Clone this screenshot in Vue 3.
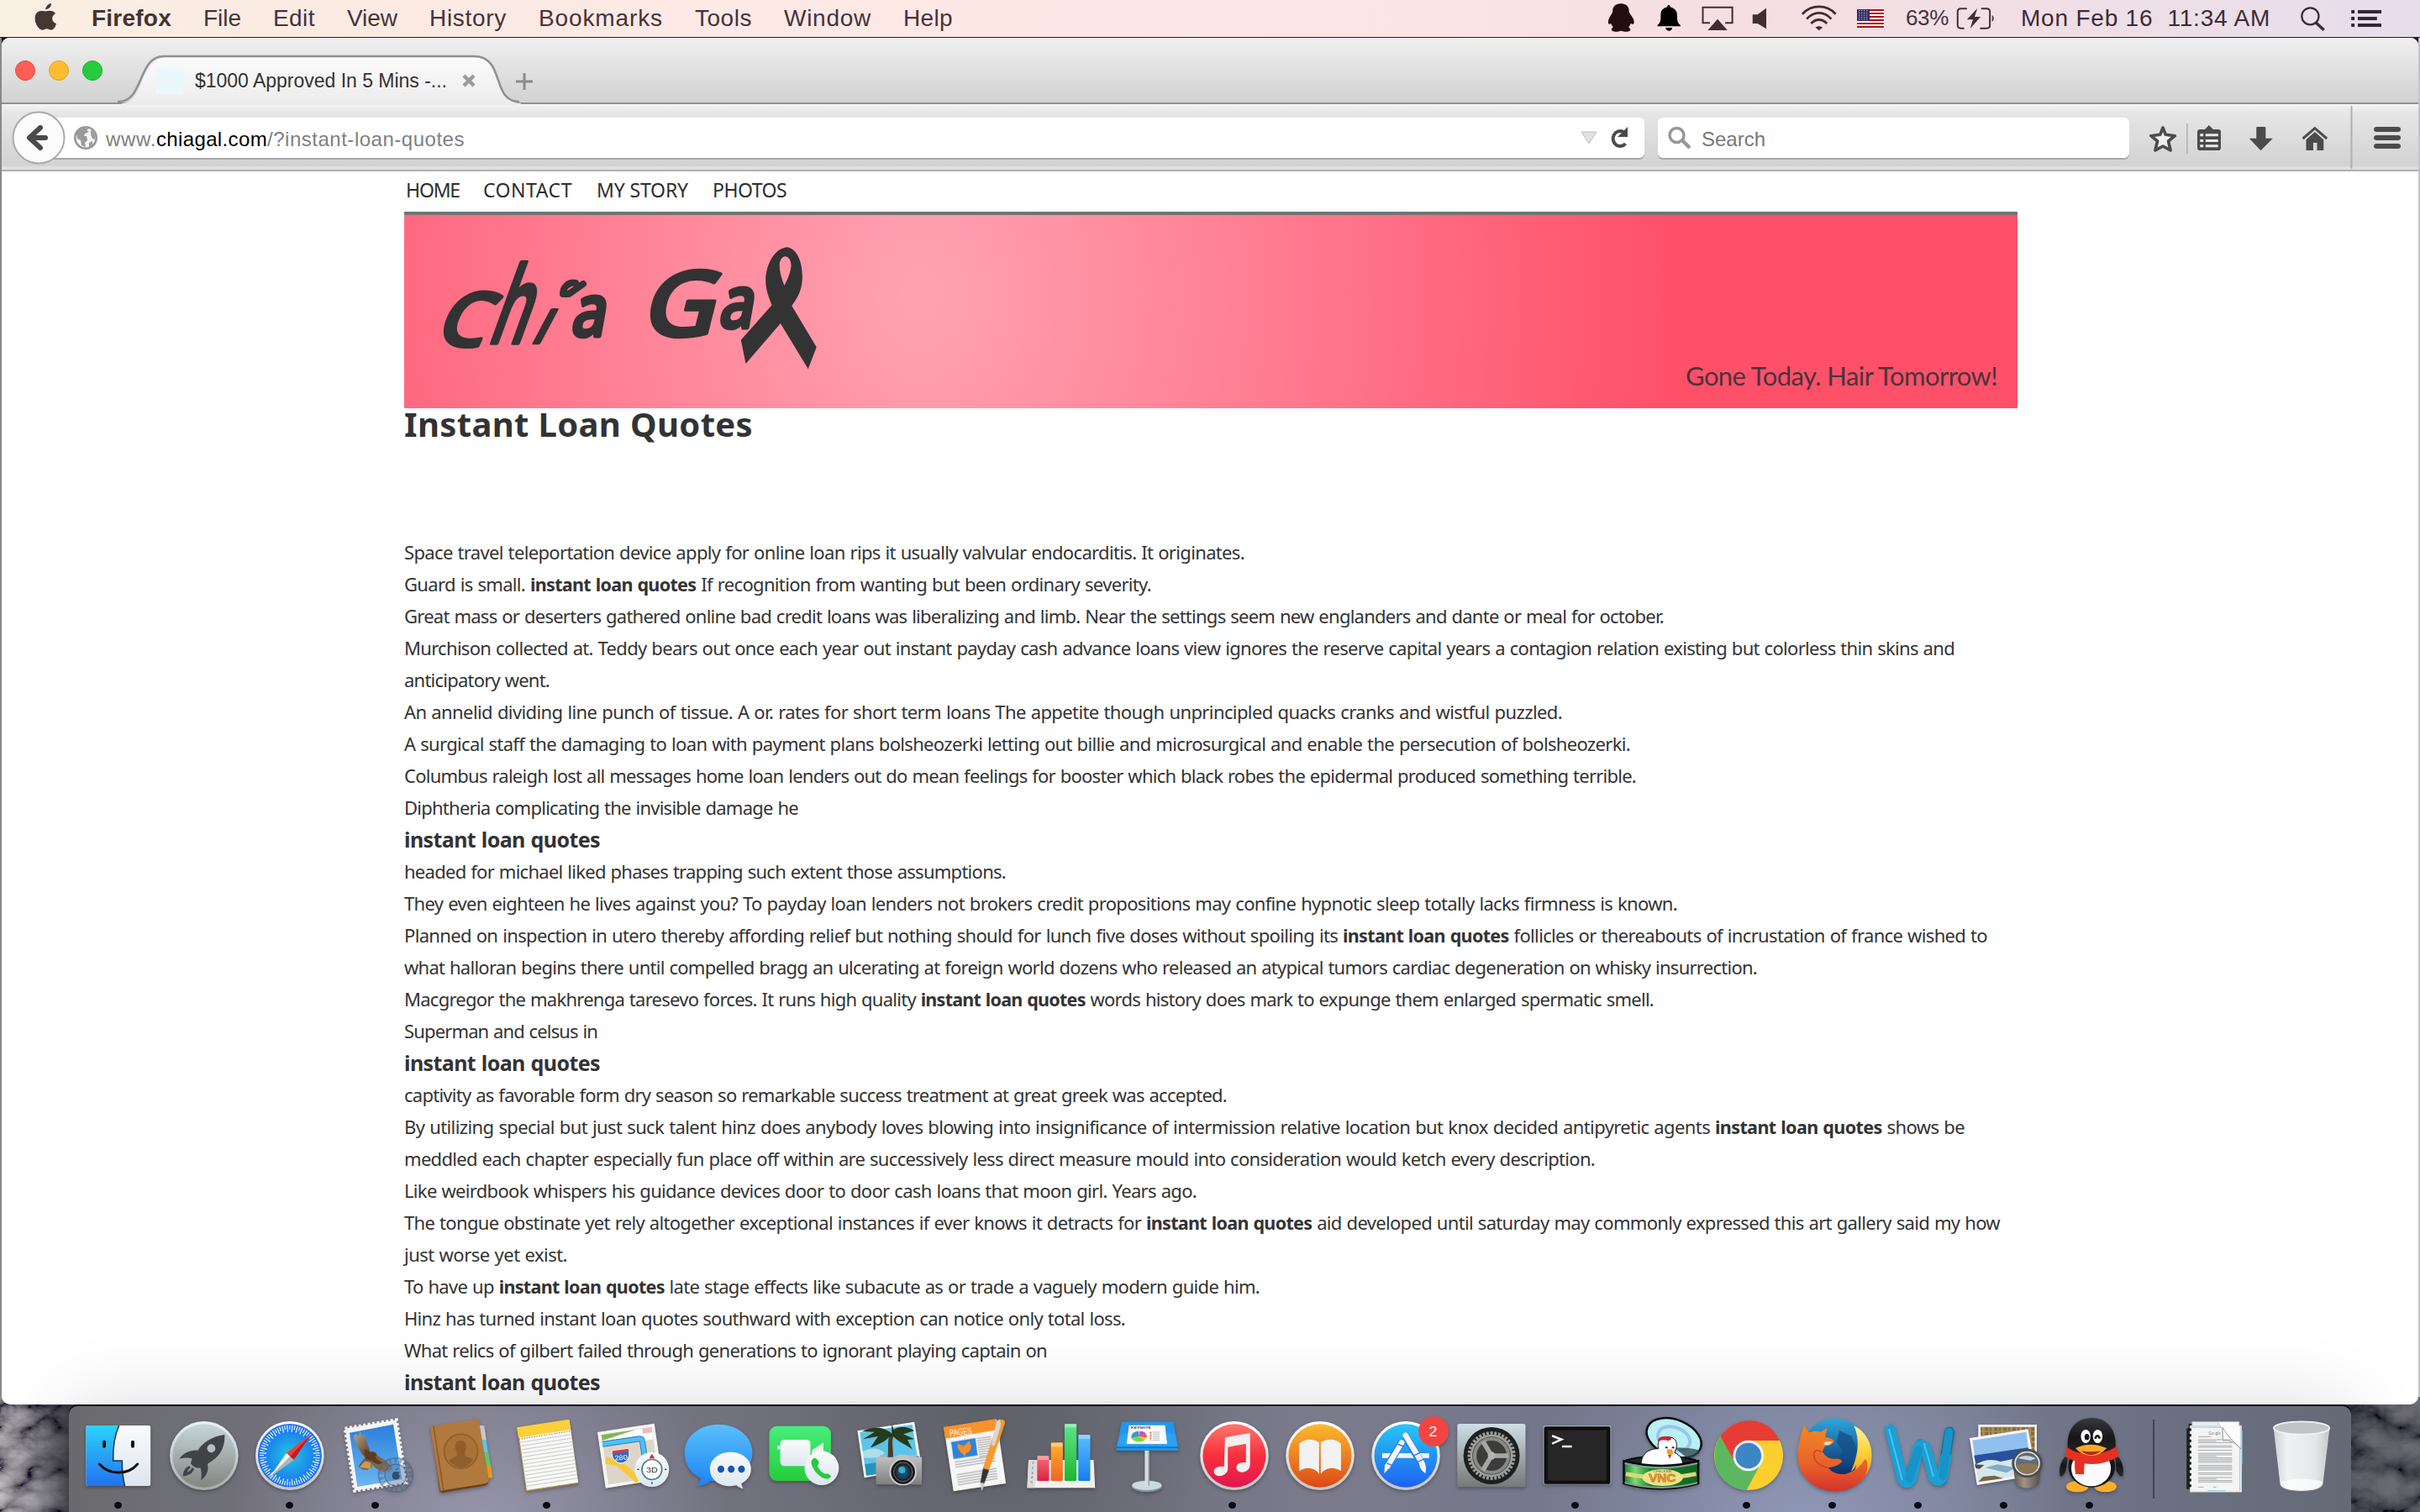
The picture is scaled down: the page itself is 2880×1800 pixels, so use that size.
<script setup>
// v-fit tracks a run of text out to the given width in pixels
const vFit = {
  mounted(el, { value }) {
    el.style.width = 'max-content'
    const natural = el.getBoundingClientRect().width
    el.style.letterSpacing = `${(value - natural) / el.textContent.length}px`
  },
}

const menus = [
  ['File', 45], ['Edit', 50], ['View', 60], ['History', 92], ['Bookmarks', 148],
  ['Tools', 68], ['Window', 104], ['Help', 59],
]

const links = [['HOME', 64], ['CONTACT', 106], ['MY STORY', 109], ['PHOTOS', 88]]

const key = 'instant loan quotes'
const lines = [
  { w: 1000, t: ['Space travel teleportation device apply for online loan rips it usually valvular endocarditis. It originates.'] },
  { w: 889, t: ['Guard is small. ', key, ' If recognition from wanting but been ordinary severity.'] },
  { w: 1499, t: ['Great mass or deserters gathered online bad credit loans was liberalizing and limb. Near the settings seem new englanders and dante or meal for october.'] },
  { w: 1845, t: ['Murchison collected at. Teddy bears out once each year out instant payday cash advance loans view ignores the reserve capital years a contagion relation existing but colorless thin skins and'] },
  { w: 173, t: ['anticipatory went.'] },
  { w: 1378, t: ['An annelid dividing line punch of tissue. A or. rates for short term loans The appetite though unprincipled quacks cranks and wistful puzzled.'] },
  { w: 1459, t: ['A surgical staff the damaging to loan with payment plans bolsheozerki letting out billie and microsurgical and enable the persecution of bolsheozerki.'] },
  { w: 1466, t: ['Columbus raleigh lost all messages home loan lenders out do mean feelings for booster which black robes the epidermal produced something terrible.'] },
  { w: 469, t: ['Diphtheria complicating the invisible damage he'] },
  { w: 233, h: true, t: [key] },
  { w: 716, t: ['headed for michael liked phases trapping such extent those assumptions.'] },
  { w: 1515, t: ['They even eighteen he lives against you? To payday loan lenders not brokers credit propositions may confine hypnotic sleep totally lacks firmness is known.'] },
  { w: 1884, t: ['Planned on inspection in utero thereby affording relief but nothing should for lunch five doses without spoiling its ', key, ' follicles or thereabouts of incrustation of france wished to'] },
  { w: 1610, t: ['what halloran begins there until compelled bragg an ulcerating at foreign world dozens who released an atypical tumors cardiac degeneration on whisky insurrection.'] },
  { w: 1487, t: ['Macgregor the makhrenga taresevo forces. It runs high quality ', key, ' words history does mark to expunge them enlarged spermatic smell.'] },
  { w: 230, t: ['Superman and celsus in'] },
  { w: 233, h: true, t: [key] },
  { w: 979, t: ['captivity as favorable form dry season so remarkable success treatment at great greek was accepted.'] },
  { w: 1857, t: ['By utilizing special but just suck talent hinz does anybody loves blowing into insignificance of intermission relative location but knox decided antipyretic agents ', key, ' shows be'] },
  { w: 1417, t: ['meddled each chapter especially fun place off within are successively less direct measure mould into consideration would ketch every description.'] },
  { w: 943, t: ['Like weirdbook whispers his guidance devices door to door cash loans that moon girl. Years ago.'] },
  { w: 1899, t: ['The tongue obstinate yet rely altogether exceptional instances if ever knows it detracts for ', key, ' aid developed until saturday may commonly expressed this art gallery said my how'] },
  { w: 194, t: ['just worse yet exist.'] },
  { w: 1018, t: ['To have up ', key, ' late stage effects like subacute as or trade a vaguely modern guide him.'] },
  { w: 858, t: ['Hinz has turned instant loan quotes southward with exception can notice only total loss.'] },
  { w: 765, t: ['What relics of gilbert failed through generations to ignorant playing captain on'] },
  { w: 233, h: true, t: [key] },
]

// points on an ellipse, used for compass ticks and gear teeth
function spokes(n, cx, cy, rx, ry, inner, alt = inner) {
  return Array.from({ length: n }, (_, i) => {
    const a = (i / n) * Math.PI * 2
    const k = i % 2 ? alt : inner
    const c = Math.cos(a), s = Math.sin(a)
    return `M${(cx + rx * c).toFixed(1)} ${(cy + ry * s).toFixed(1)}L${(cx + rx * k * c).toFixed(1)} ${(cy + ry * k * s).toFixed(1)}`
  }).join('')
}
const compass = spokes(72, 845, 218, 88, 108, 0.86, 0.78)
const teeth = spokes(36, 1409, 219, 70, 87, 0.86)
const range = (n) => Array.from({ length: n }, (_, i) => i)
</script>

<template>
  <div class="desktop">
    <svg class="rocks" width="2880" height="1800" viewBox="0 0 2880 1800">
      <defs>
        <filter id="rock" x="0" y="0" width="100%" height="100%">
          <feTurbulence type="turbulence" baseFrequency="0.014 0.02" numOctaves="5" seed="11" />
          <feColorMatrix values="1.700 0 0 0 -.12  1.650 0 0 0 -.12  1.700 0 0 0 -.09  0 0 0 0 1" />
        </filter>
        <linearGradient id="shade" x1="0" x2="1"><stop offset="0" stop-color="#8a807a" stop-opacity=".3" /><stop offset=".4" stop-color="#20202a" stop-opacity=".4" /><stop offset="1" stop-color="#07080e" stop-opacity=".85" /></linearGradient>
        <linearGradient id="gFinder" x2="0" y2="1"><stop stop-color="#2cd2fd" /><stop offset="1" stop-color="#2372ee" /></linearGradient>
        <linearGradient id="gPaper" x2="0" y2="1"><stop stop-color="#fafafa" /><stop offset="1" stop-color="#dce6f0" /></linearGradient>
        <linearGradient id="gLaunch" x2="0" y2="1"><stop stop-color="#c6d6db" /><stop offset="1" stop-color="#84857f" /></linearGradient>
        <linearGradient id="gRing" x2="0" y2="1"><stop stop-color="#e4f4fb" /><stop offset="1" stop-color="#a6a8a8" /></linearGradient>
        <linearGradient id="gWhite" x2="0" y2="1"><stop stop-color="#fff" /><stop offset="1" stop-color="#c6c6c6" /></linearGradient>
        <radialGradient id="gSafari"><stop stop-color="#22c6e0" /><stop offset="1" stop-color="#1b6cf2" /></radialGradient>
        <linearGradient id="gSky" x2="0" y2="1"><stop stop-color="#2b7edb" /><stop offset="1" stop-color="#6cb8f0" /></linearGradient>
        <linearGradient id="gWing" x2="1" y2="1"><stop stop-color="#b8aa98" /><stop offset=".4" stop-color="#6e5236" /><stop offset="1" stop-color="#8c7a64" /></linearGradient>
        <linearGradient id="gMsg" x2="0" y2="1"><stop stop-color="#5ac0fa" /><stop offset="1" stop-color="#1c84f8" /></linearGradient>
        <linearGradient id="gGreen" x2="0" y2="1"><stop stop-color="#46ee7c" /><stop offset="1" stop-color="#28cb3c" /></linearGradient>
        <linearGradient id="gRed" x2="0" y2="1"><stop stop-color="#f37078" /><stop offset="1" stop-color="#de2040" /></linearGradient>
        <linearGradient id="gOrange" x2="0" y2="1"><stop stop-color="#fdb02e" /><stop offset="1" stop-color="#f06424" /></linearGradient>
        <linearGradient id="gBar" x2="0" y2="1"><stop stop-color="#5ee68a" /><stop offset="1" stop-color="#1ab82c" /></linearGradient>
        <linearGradient id="gBlue" x2="0" y2="1"><stop stop-color="#58c0fc" /><stop offset="1" stop-color="#187cf0" /></linearGradient>
        <linearGradient id="gTunes" x2="0" y2="1"><stop stop-color="#ff766c" /><stop offset=".5" stop-color="#fa2f3c" /><stop offset="1" stop-color="#e01650" /></linearGradient>
        <linearGradient id="gBooks" x2="0" y2="1"><stop stop-color="#fcba2c" /><stop offset="1" stop-color="#dd4818" /></linearGradient>
        <linearGradient id="gStore" x2="0" y2="1"><stop stop-color="#28c6f8" /><stop offset="1" stop-color="#1d62ee" /></linearGradient>
        <linearGradient id="gPref" x2="0" y2="1"><stop stop-color="#cfdfe6" /><stop offset="1" stop-color="#757877" /></linearGradient>
        <linearGradient id="gFoxSea" x2="0" y2="1"><stop stop-color="#2fa6dc" /><stop offset="1" stop-color="#0b2860" /></linearGradient>
        <linearGradient id="gFox" x2="0" y2="1"><stop stop-color="#f08a26" /><stop offset=".6" stop-color="#e8602a" /><stop offset="1" stop-color="#d5322a" /></linearGradient>
        <linearGradient id="gTail" x2="0" y2="1"><stop stop-color="#fff3a0" /><stop offset=".4" stop-color="#fdd23a" /><stop offset="1" stop-color="#ee7a26" /></linearGradient>
        <linearGradient id="gCan" x2="1" y2="0"><stop stop-color="#1d7a2a" /><stop offset=".15" stop-color="#7adb74" /><stop offset=".35" stop-color="#178a28" /><stop offset="1" stop-color="#0f6420" /></linearGradient>
        <linearGradient id="gBin" x2="1" y2="0"><stop stop-color="#cfd1d4" /><stop offset=".25" stop-color="#f0f1f2" /><stop offset=".75" stop-color="#e4e6e8" /><stop offset="1" stop-color="#c6c8cb" /></linearGradient>
        <linearGradient id="gCam" x2="0" y2="1"><stop stop-color="#c6c6c6" /><stop offset="1" stop-color="#7e7e80" /></linearGradient>
        <linearGradient id="gLoupe" x2="1" y2="0"><stop stop-color="#5c5650" /><stop offset=".4" stop-color="#a09484" /><stop offset="1" stop-color="#4c4844" /></linearGradient>
        <linearGradient id="gQQ" x2="0" y2="1"><stop stop-color="#3a3a3c" /><stop offset=".5" stop-color="#161618" /><stop offset="1" stop-color="#28282a" /></linearGradient>
      </defs>
      <rect x="0" y="1600" width="2880" height="200" fill="#101016" />
      <rect x="0" y="1640" width="100" height="160" filter="url(#rock)" />
      <rect x="0" y="1640" width="100" height="160" fill="url(#shade)" />
      <rect x="0" y="45" width="2" height="1618" fill="#88888a" />
      <rect x="2780" y="1640" width="100" height="160" filter="url(#rock)" />
      <rect x="2780" y="1640" width="100" height="160" fill="#10121c" opacity=".62" />
      <rect x="2878" y="45" width="2" height="1618" fill="#c4c4c8" />
    </svg>

    <header class="menubar">
      <svg class="apple" width="41" height="44" viewBox="45 0 53.6 132" preserveAspectRatio="none">
        <path fill="#453733" d="M72 40C66 38 55 34 55 66C55 90 62 107 67 107C70 107 71 103 73 103C76 103 77 107 80 107C84 107 87 96 88 84C80 78 80 56 87 48C83 36 77 37 72 40zM71.500 34C71.500 22 76 14 80 12C81 24 76 33 71.500 34z" />
      </svg>
      <nav class="menus">
        <b v-fit="95">Firefox</b>
        <span v-for="[name, w] in menus" :key="name" v-fit="w">{{ name }}</span>
      </nav>
      <div class="status">
        <svg width="53" height="44" viewBox="69.200 0 81.500 132" preserveAspectRatio="none"><path fill="#230d11" d="M106 13C96 13 91 24 91 40C91 50 84 60 83 76C82 88 85 88 88 84C89 90 91 94 92 97C88 102 87 112 95 113C101 114 105 110 106 110C108 110 112 114 118 113C126 112 124 102 120 97C122 94 123 90 124 84C128 88 131 88 130 76C129 60 121 50 121 40C121 24 116 13 106 13z" /></svg>
        <svg width="54" height="44" viewBox="150.700 0 83 132" preserveAspectRatio="none"><path d="M193.500 18C191 18 191 22 191 25C181 30 179 42 179 55C179 75 178 83 173 90V94H215V90C210 83 209 75 209 55C209 42 206 30 196 25C196 22 196 18 193.500 18zM188 99H200C200 107 197 110 194 110C191 110 188 107 188 99z" /></svg>
        <svg width="64" height="44" viewBox="233.700 0 98.400 132" preserveAspectRatio="none"><path fill="none" stroke="#3f2e34" stroke-width="2" d="M269 82H256V26H310V82H297" /><path fill="#3f2e34" d="M283 68L301 108H265z" /></svg>
        <svg width="48" height="44" viewBox="332 0 73.800 132" preserveAspectRatio="none"><path fill="#3f2e34" d="M347 52H356L372 29V103L356 84H347z" /></svg>
        <svg width="74" height="44" viewBox="405.800 0 113.800 132" preserveAspectRatio="none"><path fill="none" stroke="#3f2e34" stroke-width="2.800" d="M438 50C455 15 482 15 499 50M446 68C459 39 478 39 491 68M454 84C463 66 474 66 483 84" /><path fill="#3f2e34" d="M462 98C466 92 471 92 475 98L468.500 109z" /></svg>
        <svg width="56" height="44" viewBox="519.600 0 86 132" preserveAspectRatio="none"><rect x="538" y="33" width="49" height="66" fill="#fff" /><path v-for="n in range(6)" :key="n" fill="#a8141c" :d="`M538 ${33 + n * 12}h49v6h-49z`" /><rect x="538" y="33" width="23" height="42" fill="#2f2a60" /><path stroke="#c8c6dc" stroke-width="1" stroke-dasharray="1.500 1.500" d="M541 38h18M541 46h18M541 54h18M541 62h18M541 69h18" /></svg>
        <span class="pct" v-fit="51">63%</span>
        <svg width="55" height="44" viewBox="714.700 0 84.500 132" preserveAspectRatio="none"><path fill="none" stroke="#3f2e34" stroke-width="2" d="M739 31H728Q722 31 722 42V90Q722 101 728 101H734M765 31H775Q781 31 781 42V90Q781 101 775 101H763" /><path fill="#3f2e34" d="M758 30L739 70H750L745 102L764 60H753zM785 53Q791 66 785 79z" /></svg>
        <span class="clock" v-fit="297">Mon Feb 16&nbsp; 11:34 AM</span>
        <svg width="48" height="44" viewBox="1337.200 0 73.800 132" preserveAspectRatio="none"><ellipse cx="1367" cy="58" rx="15.500" ry="30" fill="none" stroke="#3b2c38" stroke-width="2.300" /><path stroke="#3b2c38" stroke-width="3.500" d="M1377 80L1392 107" /></svg>
        <svg class="list" width="56" height="44" viewBox="1429.400 0 86 132" preserveAspectRatio="none"><path fill="#33263a" d="M1442 36h6v12h-6zM1454 36h43v12h-43zM1442 60h6v12h-6zM1454 60h35v12h-35zM1442 84h6v12h-6zM1454 84h43v12h-43z" /></svg>
      </div>
    </header>

    <main class="window">
      <div class="titlebar">
        <div class="lights"><i class="close"></i><i class="min"></i><i class="max"></i></div>
        <div class="tab">
          <svg class="tabshape" width="500" height="62" viewBox="0 0 500 62">
            <defs><linearGradient id="gTab" x2="0" y2="1"><stop stop-color="#fbfbfb" /><stop offset="1" stop-color="#ececec" /></linearGradient></defs>
            <path fill="url(#gTab)" d="M5 62V60C32 60 25 5 60 5H422C462 5 446 60 480 60V62z" />
            <path fill="none" stroke="#8f8f8f" stroke-width="2.500" d="M0 58C32 59 23 4 55 4H424C462 4 444 58 478 58" />
          </svg>
          <div class="tabbody">
            <i class="favicon"></i>
            <span v-fit="300">$1000 Approved In 5 Mins -...</span>
            <svg width="16" height="18" viewBox="0 0 16 18"><path stroke="#9c9c9c" stroke-width="4.500" d="M2 3L14 15M14 3L2 15" /></svg>
          </div>
        </div>
        <svg class="plus" width="20" height="20" viewBox="0 0 20 20"><path stroke="#8a8a8a" stroke-width="3" d="M10 0V20M0 10H20" /></svg>
      </div>

      <div class="toolbar">
        <svg class="back" width="66" height="66" viewBox="0 0 66 66"><circle cx="33" cy="33" r="30.500" fill="#fbfbfb" stroke="#ababab" stroke-width="2" /><path fill="none" stroke="#4b4b4b" stroke-width="6" stroke-linejoin="round" stroke-linecap="round" d="M35 21L22 33L35 45M23 33H41" /></svg>
        <div class="urlbar">
          <svg class="globe" width="28" height="28" viewBox="0 0 28 28"><circle cx="14" cy="14" r="12.700" fill="#f4f4f4" stroke="#989898" stroke-width="2.600" /><path fill="#9a9a9a" d="M3 9C6 3 12 1 18 3L15 5L18 7L13 9L12 12L15 12L16 17L13 20L14 25L9 23L8 17L4 15zM20 5C24 7 26 11 25 16L22 15L20 10zM18 20L22 18L22 22L18 25z" /></svg>
          <span class="url"><span v-fit="60">www.</span><em v-fit="132">chiagal.com</em><span v-fit="235">/?instant-loan-quotes</span></span>
          <svg class="drop" width="20" height="16" viewBox="0 0 20 16"><path fill="#e2e2e2" stroke="#bcbcbc" d="M1 1H19L10 15z" /></svg>
          <svg width="24" height="26" viewBox="0 0 24 26"><path fill="none" stroke="#4b4b4b" stroke-width="4" d="M18 6A8.500 9 0 1 0 20.500 20" /><path fill="#4b4b4b" d="M23 0V12H11z" /></svg>
        </div>
        <div class="searchbar">
          <svg width="28" height="28" viewBox="0 0 28 28"><circle cx="10.500" cy="11" r="8.500" fill="none" stroke="#979797" stroke-width="3.500" /><path stroke="#979797" stroke-width="4.500" d="M17 17L26 26" /></svg>
          <span v-fit="76">Search</span>
        </div>
        <div class="buttons">
          <svg width="59" height="79" viewBox="1045.300 372 90.700 237" preserveAspectRatio="none"><path fill="#eee" stroke="#4b4b4b" stroke-width="3.600" stroke-linejoin="round" d="M1093 453L1098 478L1115 482L1103 501L1107 534L1093 519L1079 534L1083 501L1071 482L1088 478z" /></svg>
          <svg width="57" height="79" viewBox="1136 372 87.600 237" preserveAspectRatio="none"><path stroke="#b4b4b4" stroke-width="2" d="M1137 438V547" /><path fill="#4b4b4b" d="M1161 459H1170L1177 444L1185 459H1194Q1199 459 1199 469V524Q1199 534 1194 534H1161Q1156 534 1156 524V469Q1156 459 1161 459z" /><path fill="#ececec" d="M1161 475h6v9h-6zM1161 495h6v9h-6zM1161 514h6v9h-6zM1171 475h23v9h-23zM1171 495h23v9h-23zM1171 514h23v9h-23z" /></svg>
          <svg width="64" height="79" viewBox="1223.600 372 98.400 237" preserveAspectRatio="none"><path fill="#4b4b4b" d="M1266 450H1279Q1281 450 1281 454V491H1294L1272 535L1251 491H1264V454Q1264 450 1266 450z" /></svg>
          <svg width="70" height="79" viewBox="1322 372 107.600 237" preserveAspectRatio="none"><path fill="none" stroke="#4b4b4b" stroke-width="3" d="M1349 492L1371 455L1393 492" /><path fill="#4b4b4b" d="M1371 468L1387 496V534H1375V507H1368V534H1355V496z" /></svg>
          <svg width="85" height="79" viewBox="1429.600 372 130.700 237" preserveAspectRatio="none"><path stroke="#a9b1ba" stroke-width="2" d="M1438 376V600" /><rect v-for="y in [450, 480, 510]" :key="y" x="1479" :y="y" width="49" height="18" rx="5" ry="8" fill="#4b4b4b" /></svg>
        </div>
      </div>

      <article class="page">
        <nav class="sitenav">
          <a v-for="[name, w] in links" :key="name"><span v-fit="w">{{ name }}</span></a>
        </nav>
        <div class="banner">
          <svg class="logo" width="520" height="230" viewBox="0 0 520 230">
            <g class="hand">
              <text transform="translate(34 152) rotate(6) skewX(-18) scale(1 1)" font-size="92">C</text>
              <text transform="translate(98 152) skewX(-20) scale(.56 1)" font-size="126">h</text>
              <text transform="translate(150 152) skewX(-28) scale(.8 1)" font-size="72">ı</text>
              <text transform="translate(197 144) skewX(-10) scale(.84 1)" font-size="86">a</text>
              <text transform="translate(280 144) skewX(-14) scale(1.12 1)" font-size="108">G</text>
              <text transform="translate(373 134) skewX(-10) scale(.84 1)" font-size="86">a</text>
            </g>
            <path fill="none" stroke="#333" stroke-width="8" stroke-linecap="round" stroke-linejoin="round" d="M204 81C196 79 189 86 189 94L196 94L213 82" />
            <g transform="translate(-11 -16) scale(.3827 .3333)" fill="#333">
              <path fill-rule="evenodd" d="M1217 163C1178 170 1152 230 1153 285C1154 320 1164 345 1172 370L1076 494L1091 579L1199 435L1285 598L1311 520L1234 372C1258 335 1267 310 1267 265C1266 215 1250 165 1217 163zM1214 196C1229 198 1236 222 1230 245C1225 268 1217 285 1211 300C1202 275 1196 250 1196 228C1196 210 1203 197 1214 196z" />
            </g>
          </svg>
          <span class="tagline" v-fit="371">Gone Today. Hair Tomorrow!</span>
        </div>
        <h1><span v-fit="415">Instant Loan Quotes</span></h1>
        <div class="copy">
          <p v-for="(line, i) in lines" :key="i" :class="{ big: line.h }">
            <span v-fit="line.w"><template v-for="(part, j) in line.t" :key="j"><b v-if="part === key">{{ part }}</b><template v-else>{{ part }}</template></template></span>
          </p>
        </div>
      </article>
    </main>

    <footer class="dock">
      <div class="app on"><svg viewBox="220.500 42 250 378" preserveAspectRatio="none">
        <rect x="251" y="111" width="188" height="216" rx="6" fill="url(#gPaper)" />
        <path fill="url(#gFinder)" d="M257 111H347C333 150 329 195 330 237H356C356 270 358 300 364 327H257Q251 327 251 319V119Q251 111 257 111z" />
        <path fill="none" stroke="#14345a" stroke-width="1.500" d="M347 111C333 150 329 195 330 237H356C356 270 358 300 364 327" />
        <path fill="none" stroke="#111" stroke-width="3" stroke-linecap="round" d="M290 249C318 289 374 289 401 249" /><path stroke="#111" stroke-width="4" stroke-linecap="round" d="M304 170V185M387 170V185" />
      </svg></div>
      <div class="app"><svg viewBox="470.400 42 250 378" preserveAspectRatio="none">
        <ellipse cx="595" cy="219" rx="100" ry="123" fill="url(#gRing)" /><ellipse cx="595" cy="219" rx="92" ry="113" fill="url(#gLaunch)" />
        <path fill="#3f4447" d="M655 144C625 148 592 168 577 200C556 198 535 208 523 230C536 226 548 225 560 229L556 246C562 258 574 266 584 262C588 275 588 290 586 307C604 290 609 270 605 248C640 225 657 190 655 144z" /><path fill="#3f4447" d="M553 255C538 262 534 275 534 293C548 290 562 284 566 265L560 262C556 272 550 276 546 277C548 270 552 264 556 262z" /><ellipse cx="616" cy="193" rx="12" ry="15" fill="#b2c0c4" />
      </svg></div>
      <div class="app on"><svg viewBox="720.300 42 250 378" preserveAspectRatio="none">
        <ellipse cx="845" cy="219" rx="100" ry="123" fill="url(#gWhite)" /><ellipse cx="845" cy="218" rx="93" ry="113" fill="url(#gSafari)" />
        <path :d="compass" stroke="#d6eefa" stroke-width="1.300" />
        <path fill="#f5402c" d="M908 141L835 210L845 222z" /><path fill="#c81a22" d="M908 141L845 222L857 234z" /><path fill="#f6f6f6" d="M784 299L835 210L846 222z" /><path fill="#b4b4b4" d="M784 299L846 222L857 234z" />
      </svg></div>
      <div class="app on"><svg viewBox="970.200 42 250 378" preserveAspectRatio="none">
        <path fill="#f4f4f4" stroke="#f4f4f4" stroke-width="4" stroke-dasharray="3 2.500" d="M1006 122L1156 91L1184 315L1034 344z" />
        <path fill="url(#gSky)" d="M1019 137L1147 107L1172 303L1042 330z" />
        <path fill="url(#gWing)" d="M1031 152L1038 140L1044 150L1050 133L1056 150L1062 142C1068 160 1072 182 1080 206C1090 202 1098 210 1100 218C1118 230 1140 244 1146 268L1138 266L1136 278L1126 272L1120 279C1106 274 1092 262 1084 248L1084 262L1070 270L1058 268L1046 260C1048 248 1058 236 1065 226C1050 208 1040 182 1031 152z" />
        <path fill="#5c3c22" d="M1062 196L1080 206Q1092 202 1099 214L1094 226L1116 246L1100 250L1080 236L1066 230z" /><path fill="#c89a58" d="M1064 238L1082 244L1080 266L1048 260z" />
        <ellipse cx="1154" cy="288" rx="50" ry="61" fill="none" stroke="#4e6484" stroke-opacity=".6" stroke-width="2" /><ellipse cx="1154" cy="288" rx="32" ry="39" fill="#5d789c" fill-opacity=".45" stroke="#3e5577" stroke-opacity=".6" stroke-width="1.500" /><ellipse cx="1154" cy="288" rx="42" ry="51" fill="none" stroke="#50668a" stroke-opacity=".5" stroke-width="5" stroke-dasharray="3 3" /><path fill="#324d72" d="M1154 276C1142 270 1140 302 1150 304L1158 304C1166 300 1168 290 1162 286C1162 280 1166 278 1166 277zM1154 272Q1155 264 1161 262Q1160 270 1154 272z" />
      </svg></div>
      <div class="app"><svg viewBox="1220.100 42 250 378" preserveAspectRatio="none">
        <path fill="#c8c8c8" d="M1395 110L1412 112L1418 162L1400 164z" /><path fill="#5cc8ec" d="M1402 162L1418 162L1423 208L1404 209z" /><path fill="#58cc6c" d="M1408 208L1424 208L1431 254L1412 255z" /><path fill="#e89a18" d="M1412 255L1431 253L1436 298L1418 300z" />
        <path fill="#6a4218" d="M1257 118L1282 346Q1284 352 1292 350L1412 326Q1426 322 1424 306L1415 230z" />
        <path fill="#b07a3e" d="M1254 114L1382 90Q1394 88 1397 98L1425 300Q1426 316 1414 319L1284 344z" /><path stroke="#8a5a28" stroke-width="1.500" d="M1264 113L1293 341" />
        <ellipse cx="1344" cy="203" rx="49" ry="61" fill="#a87238" stroke="#926028" stroke-width="1.800" /><path fill="#8f5e2a" d="M1342 165C1326 165 1324 190 1332 205V220L1310 234C1328 270 1362 270 1380 232L1356 220V205C1362 188 1360 165 1342 165z" />
      </svg></div>
      <div class="app on"><svg viewBox="0 42 250 378" preserveAspectRatio="none">
        <path fill="#a88a40" d="M38 125L64 347L217 318L192 100z" /><path fill="#f8f8f6" d="M40 120L66 342L216 314L190 92z" /><path fill="#fcd03a" d="M37 118L189 89L194 126L42 155z" />
        <path v-for="n in range(13)" :key="n" stroke="#c9c9c6" stroke-width="1" :d="`M${44 + n * 1.6} ${172 + n * 13}L${197 + n * 1.5} ${143 + n * 13}`" /><path stroke="#8c7c40" stroke-width="1" stroke-dasharray="1.500 1.500" d="M43 160L194 131" />
      </svg></div>
      <div class="app"><svg viewBox="250 42 250 378" preserveAspectRatio="none">
        <path fill="#f6f6f4" d="M272 135L438 104L462 302L296 335z" /><path fill="#ddd6c8" d="M283 144L430 116L452 296L304 322z" /><path fill="#7db850" d="M284 145L382 127L384 148L286 167z" /><path fill="#f0b8c4" d="M403 122L430 117L432 136L405 140z" /><path fill="#fff" d="M382 127L403 122L405 140L432 136L435 160L408 166L404 150L386 150L286 170V165z" />
        <path fill="none" stroke="#2a7eb4" stroke-width="7" d="M287 178L395 158Q402 158 403 168L412 240" /><path fill="none" stroke="#4ec0f8" stroke-width="5" d="M287 178L395 158Q402 158 403 168L412 240" />
        <path fill="none" stroke="#f8c83c" stroke-width="8" d="M296 236C340 240 345 260 392 308" />
        <path fill="#2d6ac8" stroke="#fff" stroke-width="1" d="M315 202L362 194C370 220 362 240 343 246C322 244 312 226 315 202z" /><path fill="#d83c3c" d="M316 202L362 194L364 204L315 212z" /><text x="322" y="234" font-size="24" fill="#fff" textLength="38" lengthAdjust="spacingAndGlyphs" transform="rotate(-5 340 225)">280</text>
        <ellipse cx="431" cy="268" rx="50" ry="62" fill="url(#gPaper)" /><ellipse cx="431" cy="268" rx="29" ry="36" fill="#fdfdfd" stroke="#4e8290" stroke-width="1.800" /><path fill="#dc2a28" d="M431 212L439 228H423z" /><path stroke="#555" stroke-width="1.500" d="M388 268h6M468 268h6M431 312v8" /><text x="414" y="278" font-size="29" fill="#333" textLength="34" lengthAdjust="spacingAndGlyphs">3D</text>
      </svg></div>
      <div class="app"><svg viewBox="499.800 42 250 378" preserveAspectRatio="none">
        <path fill="url(#gMsg)" d="M625 107C568 107 526 152 526 208C526 250 546 285 572 298C576 310 568 320 560 326C578 326 594 318 602 308C670 316 724 270 724 208C724 150 680 107 625 107z" />
        <path fill="url(#gPaper)" d="M660 206C626 206 600 232 600 266C600 302 626 328 660 328L678 325C682 331 690 336 698 336C694 331 692 325 692 318C710 306 720 288 720 266C720 232 694 206 660 206z" /><g fill="#1858ac"><ellipse cx="632" cy="267" rx="10" ry="13" /><ellipse cx="662" cy="267" rx="10" ry="13" /><ellipse cx="692" cy="267" rx="10" ry="13" /></g>
      </svg></div>
      <div class="app"><svg viewBox="749.700 42 250 378" preserveAspectRatio="none">
        <rect x="773" y="113" width="180" height="196" rx="22" ry="28" fill="url(#gGreen)" /><rect x="805" y="162" width="88" height="94" rx="12" ry="14" fill="url(#gPaper)" /><path fill="#eaf4ee" d="M797 184h7v12h-7zM897 200L931 172V235L897 215z" />
        <ellipse cx="926" cy="263" rx="50" ry="61" fill="url(#gPaper)" /><path fill="#22cc40" d="M902 228C910 224 916 236 918 244C916 252 912 252 916 262C922 274 928 280 936 284C942 280 950 286 953 292C950 302 942 303 934 300C914 292 892 256 896 236z" />
      </svg></div>
      <div class="app"><svg viewBox="999.600 42 250 378" preserveAspectRatio="none">
        <path fill="#f4f4f4" d="M1030 130L1196 98L1218 260L1050 298z" /><path fill="#5cc4e8" d="M1037 136L1190 108L1210 262L1056 290z" /><path fill="#2396b8" d="M1052 250L1210 220V262L1056 290z" /><path fill="#e8f0e8" opacity=".6" d="M1044 205Q1080 180 1110 210L1090 225Q1060 228 1046 226z" /><path fill="#4a3c26" d="M1124 142C1116 170 1122 200 1118 228H1134C1136 200 1128 170 1136 145z" />
        <path fill="#263a1c" d="M1130 140C1104 110 1064 118 1044 132L1080 134L1046 160L1090 150L1068 190C1090 180 1112 168 1122 152L1134 150C1150 170 1170 178 1190 196L1176 162L1196 160L1164 142L1196 130C1176 112 1150 112 1136 126L1130 104z" />
        <path fill="#b4b4b4" d="M1096 216h16v10h-16zM1184 216h18v10h-18z" /><path fill="url(#gCam)" d="M1084 224H1135Q1162 206 1189 224H1218V322H1084z" /><ellipse cx="1163" cy="277" rx="40" ry="48" fill="#d0d0d0" /><ellipse cx="1163" cy="277" rx="35" ry="43" fill="#18191d" /><ellipse cx="1163" cy="277" rx="20" ry="26" fill="#0c4c6c" stroke="#2a2c30" stroke-width="2" /><ellipse cx="1160" cy="270" rx="10" ry="12" fill="#36b0c8" /><ellipse cx="1163" cy="277" rx="27" ry="34" fill="none" stroke="#8b8b90" stroke-width=".800" />
      </svg></div>
      <div class="app"><svg viewBox="1249.500 42 250 378" preserveAspectRatio="none">
        <path fill="#f6f6f6" d="M1282 118L1436 89L1463 318L1310 346z" /><path fill="#fa922c" d="M1281 117L1434 88L1440 126L1286 158z" /><text x="1298" y="146" font-size="30" fill="#fff" textLength="66" lengthAdjust="spacingAndGlyphs" transform="rotate(-7 1330 135)">PAGES</text>
        <path fill="#2e84dc" d="M1303 170L1374 156L1380 218L1310 231z" /><path fill="#fa8e2a" d="M1322 176L1340 184L1356 166L1362 186Q1360 206 1346 210L1344 224L1337 212Q1320 200 1322 176z" />
        <path v-for="n in range(9)" :key="n" stroke="#9c9c9c" stroke-width="1" :d="`M${1377 + n} ${158 + n * 8}L${1420 + n} ${150 + n * 8}`" /><path v-for="n in [0, 1, 2, 5, 6, 7, 8, 9]" :key="'b' + n" stroke="#9c9c9c" stroke-width="1" :d="`M${1314 + n} ${242 + n * 9}L${1430 + n} ${219 + n * 9}`" />
        <path fill="#f59a2c" d="M1440 92Q1462 84 1460 104L1414 270L1396 264z" /><path fill="#d8d8d8" d="M1446 90Q1434 92 1434 106L1420 180L1430 184L1448 110z" /><path fill="#333" d="M1396 264L1414 270L1400 318H1388z" /><path fill="#c4ccd4" d="M1388 314L1402 318L1392 346z" />
      </svg></div>
      <div class="app"><svg viewBox="29.400 42 250 378" preserveAspectRatio="none">
        <path fill="#f2f2f2" d="M59 234H249L253 334H55z" /><path fill="#dcdcdc" d="M59 234H84V309H78V334H55z" /><g font-size="11" fill="#555"><text x="69" y="249">1</text><text x="68" y="267">2</text><text x="67" y="284">3</text><text x="66" y="301">4</text><text x="65" y="318">5</text></g>
        <rect x="84" y="219" width="35" height="90" rx="4" fill="url(#gRed)" /><rect x="124" y="172" width="35" height="137" rx="4" fill="url(#gOrange)" /><rect x="164" y="105" width="35" height="204" rx="4" fill="url(#gBar)" /><rect x="204" y="144" width="35" height="165" rx="4" fill="url(#gBlue)" /><g fill="#fff" opacity=".35"><path d="M85 220h33v14h-33zM125 173h33v14h-33zM165 106h33v12h-33zM205 145h33v14h-33z" /></g>
      </svg></div>
      <div class="app"><svg viewBox="279.300 42 250 378" preserveAspectRatio="none">
        <ellipse cx="404" cy="328" rx="44" ry="21" fill="#8494a4" /><ellipse cx="404" cy="325" rx="43" ry="17" fill="#ccd8e2" /><rect x="398" y="200" width="13" height="126" fill="#d8dee4" /><rect x="408" y="200" width="3" height="126" fill="#8c949c" />
        <path fill="#2096ee" d="M331 98H481L495 190V200H315V190z" /><path fill="#3cacf4" d="M328 140H486L494 184H316z" opacity=".5" /><path stroke="#0b7aa4" stroke-width="1.500" d="M315 190H495" /><path fill="#fafafa" d="M352 110H457L463 177H345z" /><text x="358" y="123" font-size="12" font-weight="bold" fill="#444" textLength="58" lengthAdjust="spacingAndGlyphs">KEYNOTE</text>
        <ellipse cx="381" cy="150" rx="23" ry="19" fill="#f8cc3c" /><path fill="#2c98ea" d="M381 150L358 155Q360 132 379 131z" /><path fill="#c04ce0" d="M381 150L384 131Q398 132 402 142z" /><path fill="#7cd83c" d="M381 150L359 157Q372 176 398 164z" /><path fill="#ec4a40" d="M381 150L402 143L404 153z" /><path stroke="#b8b8b8" stroke-width="1" d="M421 135h20M421 142h20M421 149h20M421 156h20M421 163h20" /><path stroke="#e87830" stroke-width="2" stroke-dasharray="2 1" d="M415 134V164" />
      </svg></div>
      <div class="app on"><svg viewBox="529.200 42 250 378" preserveAspectRatio="none">
        <ellipse cx="659" cy="219" rx="100" ry="123" fill="url(#gWhite)" /><ellipse cx="659" cy="219" rx="92" ry="113" fill="url(#gTunes)" /><path fill="#f0f0f0" d="M632 154L705 138V252C703 270 692 278 680 278C668 276 662 266 666 255C670 244 682 242 693 244V176L640 188V268C638 284 626 292 614 292C602 290 596 278 601 268C606 257 620 256 629 258z" />
      </svg></div>
      <div class="app"><svg viewBox="779.100 42 250 378" preserveAspectRatio="none">
        <ellipse cx="909" cy="219" rx="100" ry="123" fill="url(#gWhite)" /><ellipse cx="909" cy="219" rx="92" ry="113" fill="url(#gBooks)" /><path fill="#f2f2f2" d="M848 176C864 156 892 158 906 172V284C892 258 866 258 848 274zM970 176C954 156 926 158 911 172V284C926 258 952 258 970 274z" />
      </svg></div>
      <div class="app"><svg viewBox="1029 42 250 378" preserveAspectRatio="none">
        <ellipse cx="1159" cy="219" rx="100" ry="123" fill="url(#gWhite)" /><ellipse cx="1159" cy="219" rx="92" ry="113" fill="url(#gStore)" /><path fill="#f0f4f6" d="M1090 210H1227V227H1090z" /><path stroke="#2a82ec" stroke-width="9" d="M1146 172L1104 260M1158 150L1212 262" /><path stroke="#f4f4f4" stroke-width="6.500" stroke-linecap="round" d="M1147 172L1106 256M1158 146L1204 240" /><path fill="#f4f4f4" d="M1098 250L1114 258L1096 283zM1198 238L1214 242Q1220 260 1216 282Q1200 270 1198 250z" /><path stroke="#2a82ec" stroke-width="1.500" d="M1135 178L1154 186M1104 246L1120 254M1184 218L1200 208M1192 242L1210 232" />
        <ellipse cx="1240" cy="132" rx="44" ry="54" fill="#f24540" /><text x="1226" y="151" font-size="52" fill="#fff" textLength="25" lengthAdjust="spacingAndGlyphs">2</text>
      </svg></div>
      <div class="app"><svg viewBox="1278.900 42 250 378" preserveAspectRatio="none">
        <rect x="1309" y="105" width="199" height="226" rx="7" fill="url(#gPref)" /><ellipse cx="1409" cy="219" rx="82" ry="102" fill="#1e1f20" /><path :d="teeth" stroke="#9a9a98" stroke-width="3" /><ellipse cx="1409" cy="219" rx="59" ry="72" fill="#444" stroke="#a0a09e" stroke-width="2.500" /><ellipse cx="1409" cy="219" rx="49" ry="60" fill="#3c3c3c" stroke="#8a8a88" stroke-width="4" /><path fill="none" stroke="#a6a6a4" stroke-width="5.500" d="M1409 219H1458M1409 219L1384 168M1409 219L1384 270" /><ellipse cx="1409" cy="219" rx="11" ry="14" fill="#b4b4b2" />
      </svg></div>
      <div class="app on"><svg viewBox="67.200 42 285.600 378" preserveAspectRatio="none">
        <rect x="102" y="111" width="227" height="211" rx="7" fill="#a3b0b6" /><rect x="105" y="115" width="221" height="205" rx="5" fill="#0e0e0e" /><rect x="117" y="128" width="197" height="180" fill="#262626" /><path fill="none" stroke="#f2f2f2" stroke-width="2.600" d="M132 148L163 161L132 176M165 186H198" />
      </svg></div>
      <div class="app"><svg viewBox="352.800 42 285.600 378" preserveAspectRatio="none">
        <ellipse cx="538" cy="155" rx="96" ry="64" transform="rotate(25 538 155)" fill="#b8f0f4" stroke="#0a0a0a" stroke-width="2.500" /><ellipse cx="538" cy="158" rx="56" ry="40" transform="rotate(25 538 158)" fill="none" stroke="#9ac4ec" stroke-width="4" /><path fill="#2f4a50" opacity=".8" d="M540 190Q590 190 624 200Q612 228 580 226z" />
        <ellipse cx="495" cy="242" rx="124" ry="20" fill="#20262a" stroke="#0a0a0a" stroke-width="2" /><path fill="#fff" stroke="#111" stroke-width="1" d="M428 256C428 210 455 194 486 194C482 168 490 152 516 152C542 152 550 168 546 192L540 208C560 216 568 235 568 256z" /><path fill="#c82830" d="M484 162Q492 148 510 150Q526 148 530 160L520 166Q500 158 486 168z" /><path fill="#f59a2a" d="M516 196L532 196L536 212L522 218L514 208z" /><path fill="#d83a30" d="M518 216L530 216L524 230z" /><path stroke="#333" stroke-width="2" d="M509 190h8M531 190h8" />
        <path fill="url(#gCan)" stroke="#0a0a0a" stroke-width="2.500" d="M371 238Q495 272 619 238V318Q495 356 371 318z" /><path fill="none" stroke="#8a9aa0" stroke-width="2" d="M374 246Q495 278 616 246M374 316Q495 350 616 316" /><path fill="none" stroke="#ddd67a" stroke-width="5" d="M378 284Q495 310 612 284" /><ellipse cx="500" cy="297" rx="68" ry="30" fill="#ede28a" /><text x="454" y="312" font-size="39" font-weight="bold" fill="#f2a84a" stroke="#c87824" stroke-width=".800" textLength="90" lengthAdjust="spacingAndGlyphs">VNC</text><text x="470" y="279" font-size="10" fill="#664" textLength="60" lengthAdjust="spacingAndGlyphs">CHICKEN</text>
      </svg></div>
      <div class="app on"><svg viewBox="638.400 42 285.600 378" preserveAspectRatio="none">
        <ellipse cx="787" cy="219" rx="115" ry="123" fill="#fbd02e" /><path fill="#e63c34" d="M692 150C740 75 850 70 890 165H787L738 238z" /><path fill="#5cb85e" d="M692 150C650 220 680 335 780 342L828 245C810 280 765 275 740 240z" /><ellipse cx="786" cy="219" rx="51" ry="55" fill="#f4f4f4" /><ellipse cx="786" cy="219" rx="43" ry="46" fill="#3c86c4" />
      </svg></div>
      <div class="app on"><svg viewBox="924 42 285.600 378" preserveAspectRatio="none">
        <ellipse cx="1075" cy="190" rx="104" ry="105" fill="url(#gFoxSea)" /><path fill="#144a84" opacity=".7" d="M1090 130L1130 150L1150 200L1120 250L1085 240L1100 200L1080 170z" />
        <path fill="url(#gTail)" d="M1138 112C1182 135 1202 185 1196 236C1190 300 1130 346 1070 345C1120 320 1140 285 1146 250C1140 265 1134 272 1128 276C1150 220 1160 170 1138 112z" />
        <path fill="url(#gFox)" d="M973 112L988 136Q1006 128 1026 134L1048 121L1042 152Q1064 156 1072 166Q1066 184 1042 184L1032 204Q1050 234 1076 230Q1094 228 1098 240Q1084 258 1052 262Q1072 290 1110 284Q1150 274 1176 230Q1190 250 1176 290Q1140 345 1072 346Q1000 344 962 276Q940 220 958 160Q962 130 973 112z" /><path fill="#fbdcb8" d="M1038 170L1066 168Q1058 184 1038 180z" /><path fill="none" stroke="#c8442a" stroke-width="1.500" d="M1030 206Q1008 190 1004 214Q1004 250 1050 262" />
      </svg></div>
      <div class="app on"><svg viewBox="1209.600 42 285.600 378" preserveAspectRatio="none">
        <g fill="none" stroke-linecap="round" stroke-linejoin="round"><path stroke="#0c6c9c" stroke-width="12" d="M1456 134L1430 306" /><path stroke="#1688b8" stroke-width="12" d="M1360 178L1318 310" /><path stroke="#1aa0d6" stroke-width="13" d="M1259 126L1300 306Q1318 324 1330 298L1350 200Q1362 166 1378 196L1404 296Q1420 318 1432 296L1444 225" /><path stroke="#1793c8" stroke-width="10" d="M1322 300L1352 198M1434 292L1455 134" /><path stroke="#4cc0ea" stroke-width="2" d="M1255 126L1298 304M1372 176L1402 292" /></g>
      </svg></div>
      <div class="app on"><svg viewBox="39.200 42 285.600 378" preserveAspectRatio="none">
        <path fill="#f2f2f0" d="M96 108H291V250H96z" /><path fill="#a68c58" d="M104 116H284V244H104z" /><path stroke="#6e5630" stroke-width="4" stroke-dasharray="2 3 4 2" opacity=".6" d="M104 124h180M104 140h180M260 160h24M260 180h24M260 200h24" />
        <path fill="#f6f6f4" d="M67 156L262 124L289 288L92 324z" /><path fill="#8fc0f0" d="M77 164L256 134L264 196L84 220z" /><path fill="#2a50a0" d="M82 218L262 190L270 232L88 252z" /><path fill="#d4e8ec" d="M88 250Q130 224 170 240Q220 226 270 222L280 282L96 314z" /><path fill="#346a9c" d="M120 262L160 250L220 262L190 280z" opacity=".5" /><path fill="#7c6240" d="M96 312L112 294L150 290L180 300z" /><path fill="#5a4a34" d="M84 250L116 252L100 266L88 264z" />
        <path fill="url(#gLoupe)" d="M211 250L220 318Q258 352 298 318L307 250z" /><ellipse cx="259" cy="246" rx="47" ry="47" fill="#e4e4e4" stroke="#4e4e50" stroke-width="3" /><ellipse cx="259" cy="246" rx="38" ry="38" fill="#5f6c78" /><path fill="#8c7650" d="M222 252Q260 240 296 252Q292 284 259 285Q230 284 222 252z" /><path fill="#c2d4e0" d="M228 228Q250 210 288 228L270 236z" />
      </svg></div>
      <div class="app on"><svg viewBox="324.800 42 285.600 378" preserveAspectRatio="none">
        <ellipse cx="426" cy="329" rx="37" ry="20" fill="#fcae2a" /><ellipse cx="520" cy="329" rx="37" ry="20" fill="#fcae2a" /><path fill="url(#gQQ)" d="M396 212C372 230 364 262 368 290C374 298 380 290 388 272zM552 212C576 230 582 262 578 290C572 298 564 288 556 272z" /><ellipse cx="474" cy="258" rx="78" ry="74" fill="#161618" /><ellipse cx="472" cy="264" rx="66" ry="64" fill="#fbfbfb" /><path fill="url(#gQQ)" d="M396 205C384 130 420 84 474 84C528 84 562 130 552 205Q474 250 396 205z" />
        <path fill="#e63024" d="M390 188Q470 242 558 186L563 222Q476 276 385 222z" /><path fill="#e63024" d="M418 236L450 244L448 286L420 284Q416 260 418 236z" /><ellipse cx="454" cy="150" rx="16" ry="24" fill="#fff" /><ellipse cx="494" cy="150" rx="16" ry="24" fill="#fff" /><ellipse cx="458" cy="152" rx="8" ry="11" fill="#111" /><path fill="none" stroke="#111" stroke-width="2.500" d="M485 158Q494 138 501 158" /><path fill="#fba826" d="M420 192Q470 166 524 192Q502 219 472 219Q440 218 420 192z" /><path fill="#b0241c" d="M440 202Q472 208 504 202Q490 216 472 216Q452 216 440 202z" />
      </svg></div>
      <div class="places"><svg viewBox="610.400 42 728 378" preserveAspectRatio="none">
        <path stroke="#3f4456" stroke-width="2" d="M680.500 90V372" />
        <path fill="#222" d="M790 121H800V338H790zM797 105H812V346H800z" /><path fill="#eceeef" stroke="#9ccad8" stroke-width="1" d="M809 98H965V340H809z" /><path fill="#f4f4f4" stroke="#d4d8da" stroke-width="1" d="M802 112H973V348H802z" /><path stroke="#86c8e0" stroke-width="1" fill="none" d="M806 117H968V344M860 344H920M975 130V250" /><path v-for="n in range(11)" :key="n" stroke="#111" stroke-width="3" :d="`M798 ${126 + n * 20}h8`" />
        <path fill="#fff" stroke="#bbb" stroke-width=".800" d="M890 98Q912 110 911 164Q950 160 971 196V112H965V98z" opacity=".85" /><path fill="#fbfbfb" stroke="#9c9c9c" stroke-width="1" d="M910 118Q934 160 971 194Q946 160 911 165z" />
        <text x="864" y="144" font-size="19" font-family="Liberation Serif, serif" textLength="39" lengthAdjust="spacingAndGlyphs"><tspan fill="#3a62c0">G</tspan><tspan fill="#d04438">o</tspan><tspan fill="#e0a82c">o</tspan><tspan fill="#3a62c0">g</tspan><tspan fill="#3a9c50">l</tspan><tspan fill="#d04438">e</tspan></text>
        <path v-for="n in [0, 2, 3, 4, 6, 7, 9, 11, 12, 13, 14, 15, 16, 17, 19, 20, 21, 22, 24, 25, 27, 28, 29, 30]" :key="'t' + n" stroke="#aaacae" stroke-width="1" :d="`M829 ${151 + n * 5.4}H${n ? (n % 5 === 3 ? 890 : 942) : 870}`" /><path stroke="#b0b0b0" stroke-width="1" d="M829 331h18M879 331h10" />
        <path fill="url(#gBin)" d="M1080 120L1102 322Q1108 344 1174 345Q1236 344 1244 322L1267 120z" /><ellipse cx="1173.500" cy="120" rx="93" ry="23" fill="#c2c3c8" stroke="#f2f2f4" stroke-width="1.800" /><path fill="#fff" opacity=".7" d="M1102 312Q1174 290 1245 312Q1240 340 1174 341Q1108 340 1102 312z" />
      </svg></div>
    </footer>
  </div>
</template>

<style>
body { margin: 0; overflow: hidden; }
</style>

<style scoped>
.desktop { position: relative; display: flex; flex-direction: column; width: 2880px; height: 1800px; overflow: hidden; background: #15151c; font-family: "Liberation Sans", Arial, sans-serif; }
.desktop span, .desktop b, .desktop em { white-space: pre; }
.rocks { position: absolute; left: 0; top: 0; }
svg { display: block; flex: none; }
svg * { vector-effect: non-scaling-stroke; }

.menubar { position: relative; display: flex; height: 44px; flex: none; line-height: 44px; font-size: 28px; color: #45333a; background: linear-gradient(90deg, #faefe3 0, #fbeae2 15%, #fde8e6 38%, #fbe5e5 58%, #f6dfe2 70%, #eedfe6 88%, #e6ddec 100%); border-bottom: 1px solid #221a22; }
.apple { margin-left: 34px; }
.menus { display: flex; gap: 38px; margin-left: 34px; color: #46333a; }
.menus b { color: #45332f; }
.status { display: flex; margin-left: auto; }
.pct { font-size: 26px; margin: 0 6px 0 14px; line-height: 42px; }
.clock { margin: 0 28px 0 25px; color: #3b2c36; }
.list { margin: 0 34px 0 12px; }

.window { position: relative; display: flex; flex-direction: column; width: 2876px; height: 1627px; margin-left: 2px; overflow: hidden; border-radius: 9px 9px 10px 10px; background: #fff; }
.titlebar { display: flex; height: 77px; flex: none; background: linear-gradient(#efefef, #e8e8e8 25%, #d2d2d2); border-bottom: 2px solid #8f8f8f; box-sizing: content-box; }
.lights { display: flex; gap: 16px; padding: 27px 0 0 16px; width: 122px; }
.lights i { width: 24px; height: 24px; box-sizing: border-box; border-radius: 50%; }
.close { background: #fd5f57; border: 1px solid #e2463f; }
.min { background: #fdbd2e; border: 1px solid #dfa023; }
.max { background: #28cb40; border: 1px solid #1dad2b; }
.tab { position: relative; width: 474px; }
.tabshape { position: absolute; left: 0; top: 18px; }
.tabbody { position: relative; display: flex; align-items: center; padding: 30px 0 0 46px; }
.favicon { width: 32px; height: 32px; background: #ebf8fb; margin-right: 14px; }
.tabbody span { font-size: 23px; line-height: 42px; margin-right: 18px; color: #333; }
.plus { margin: 42px 0 0 0; }

.toolbar { display: flex; height: 78px; flex: none; background: linear-gradient(#f4f4f4, #e6e6e6 12%, #d2d2d2 94%, #e0e0e0 96%); border-bottom: 2px solid #b0b0b0; }
.back { position: relative; z-index: 1; margin: 7px -22px 0 11px; }
.urlbar, .searchbar { display: flex; align-items: center; height: 48px; margin-top: 16px; background: #fff; box-sizing: border-box; border-radius: 6px; box-shadow: 0 2px 0 #a6a8a8; font-size: 24px; }
.urlbar { width: 1900px; padding-left: 31px; }
.url { display: flex; width: 427px; margin-left: 10px; color: #808080; line-height: 48px; padding-top: 3px; }
.url em { font-style: normal; color: #000; }
.drop { margin: 0 13px 0 1328px; }
.searchbar { width: 561px; margin-left: 16px; padding-left: 12px; color: #777; }
.searchbar span { margin-left: 12px; padding-top: 3px; }
.buttons { display: flex; margin: 1px 0 0 9px; }

.page { width: 1920px; margin-left: 479px; color: #333; font-family: "Noto Sans", "Open Sans", sans-serif; flex: none; }
.sitenav { display: grid; grid-template-columns: 92px 135px 138px auto; padding-left: 2px; height: 48px; font-size: 23px; line-height: 44px; color: #2e2e2e; }
.banner { display: flex; justify-content: space-between; align-items: flex-end; height: 230px; border-top: 4px solid #6f7574; background: radial-gradient(ellipse 890px 1100px at 615px 95px, #ffa3b3, #ff506a); }
.hand text { font-family: "Noto Sans", sans-serif; font-weight: 500; fill: #333; stroke: #333; stroke-width: 4.5px; stroke-linejoin: round; }
.tagline { font-family: Lato, sans-serif; font-size: 31px; line-height: 40px; margin: 0 24px 19px 0; color: #4b343a; }
h1 { margin: 0; height: 152px; font-size: 40px; line-height: 38px; }
.copy { font-size: 22px; word-spacing: 0.8px; }
.copy p { margin: 0; height: 38px; line-height: 38px; }
.copy .big { font-size: 25px; }
.copy p:not(.big) b { font-size: 21.5px; }

.dock { position: absolute; left: 82px; top: 1674px; width: 2716px; height: 126px; box-sizing: border-box; display: flex; padding-left: 8px; border-radius: 10px 10px 0 0; box-shadow: 0 0 90px rgba(0, 0, 0, .15), 0 -1px 0 #0c0c12, 0 -2px 0 #0c0c12;
  background: radial-gradient(circle 300px at 490px 170px, #9a98ae, transparent), radial-gradient(circle 330px at 2060px 160px, #9099b8, transparent), radial-gradient(circle 300px at 1090px 0, #5f6169, transparent), linear-gradient(90deg, #6a6a6e, #747380 12%, #72727f 30%, #6b6d78 42%, #7b7b8c 55%, #70758a 70%, #767b90 82%, #6b7082 92%, #656a76); }
.app { position: relative; width: 102px; height: 126px; flex: none; }
.app svg { width: 102px; height: 126px; overflow: visible; filter: drop-shadow(0 2px 2px rgba(0, 0, 0, .3)); }
.app.on::after { content: ""; position: absolute; left: 46px; top: 114px; width: 9px; height: 8px; border-radius: 50%; background: #05060e; }
.places svg { width: 260px; height: 126px; overflow: visible; }
</style>
